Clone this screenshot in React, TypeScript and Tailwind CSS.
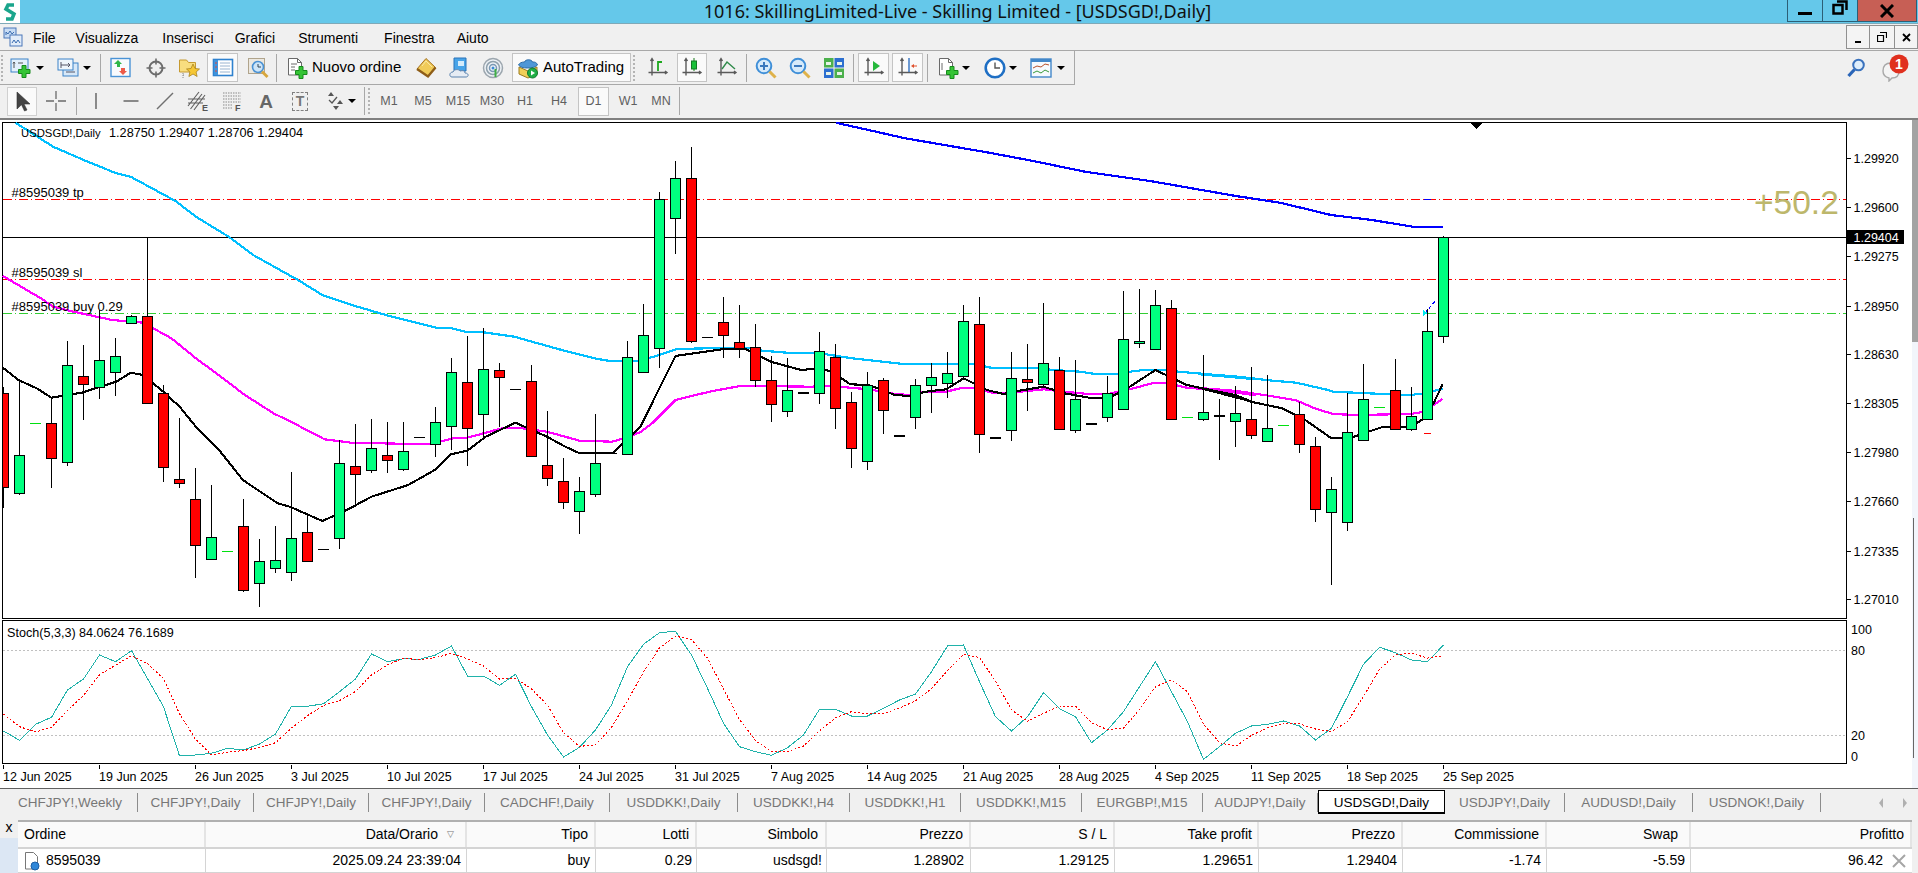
import React from "react";

type P = [number, number];
const A = (p: P[]): P[] => p.map(([x, y]) => [x / 2.45, 120 + y / 3]);
const B = (p: P[]): P[] => p.map(([x, y]) => [640 + x / 2.45, 120 + y / 3]);
const C = (p: P[]): P[] => p.map(([x, y]) => [1200 + x / 2.184, 230 + y / 3]);
const pts = (p: P[]) => p.map(([x, y]) => `${x.toFixed(1)},${y.toFixed(1)}`).join(" ");

const blueMa: P[] = [
  ...B([[480, 8], [650, 55], [850, 97], [960, 122], [1090, 155], [1250, 183], [1460, 228], [1568, 248]]),
  ...([[130, 645], [230, 660], [330, 680], [405, 680]] as P[]).map(([x, y]) => [1278 + x / 2.45, y / 3] as P),
];
const skyMa: P[] = [
  ...A([[38, 8], [130, 80], [205, 120], [285, 160], [320, 170], [430, 243], [480, 290], [560, 350], [620, 405], [730, 480], [790, 525], [870, 558], [960, 590], [1070, 623], [1100, 623], [1145, 637], [1185, 637], [1260, 650], [1370, 688], [1460, 716], [1490, 722]]),
  ...B([[0, 722], [20, 715], [60, 700], [90, 687], [165, 685], [280, 685], [300, 692], [360, 698], [430, 698], [520, 715], [640, 731], [810, 731], [860, 743], [980, 743], [1010, 750], [1080, 755], [1110, 761], [1170, 761], [1200, 755], [1240, 749], [1280, 749], [1320, 755], [1460, 770], [1510, 778]]),
  ...C([[0, 433], [40, 435], [90, 441], [150, 451], [210, 458], [280, 480], [290, 485], [400, 492], [460, 495], [490, 490], [530, 476]]),
];
const magMa: P[] = [
  ...A([[6, 467], [100, 535], [130, 560], [180, 575], [275, 600], [350, 608], [420, 655], [480, 715], [530, 760], [600, 825], [670, 880], [720, 910], [795, 958], [860, 968], [1050, 973], [1110, 955], [1145, 953], [1230, 925], [1280, 925], [1340, 935], [1420, 962], [1500, 965], [1540, 950]]),
  ...B([[0, 937], [30, 910], [87, 840], [170, 815], [245, 798], [285, 798], [420, 800], [460, 797], [560, 808], [625, 822], [660, 825], [700, 815], [750, 815], [790, 803], [820, 805], [870, 820], [890, 820], [930, 815], [990, 808], [1040, 815], [1090, 821], [1150, 821], [1200, 808], [1260, 788], [1285, 788], [1340, 803], [1460, 815], [1510, 826]]),
  ...C([[0, 474], [80, 483], [150, 497], [210, 511], [250, 535], [290, 552], [340, 555], [460, 552], [490, 545], [510, 525], [530, 507]]),
];
const blackMa: P[] = [
  ...A([[6, 742], [45, 780], [90, 805], [126, 833], [200, 818], [285, 785], [320, 758], [350, 765], [400, 815], [440, 860], [480, 920], [540, 995], [595, 1080], [680, 1150], [710, 1160], [790, 1203], [850, 1170], [910, 1130], [1000, 1095], [1065, 1050], [1105, 1003], [1145, 992], [1190, 950], [1263, 908], [1340, 950], [1385, 980], [1420, 1000], [1500, 1000]]),
  ...B([[0, 922], [87, 708], [200, 688], [260, 688], [320, 725], [395, 750], [440, 745], [470, 755], [515, 793], [560, 795], [625, 825], [660, 828], [700, 815], [750, 808], [793, 775], [850, 810], [890, 822], [930, 812], [988, 800], [1040, 820], [1100, 833], [1150, 833], [1200, 800], [1263, 750], [1340, 795], [1460, 826], [1500, 845]]),
  ...C([[0, 474], [70, 493], [110, 515], [180, 535], [230, 570], [285, 623], [330, 623], [400, 590], [460, 590], [490, 565], [510, 520], [530, 463]]),
];

type K = [string, number, number, number, number];
const candles: K[] = [
  ["r", 820, 1100, 800, 1165], ["g", 1006, 1120, 783, 1125], ["d", 910, 910, 0, 0], ["r", 910, 1015, 833, 1103],
  ["g", 736, 1025, 663, 1037], ["r", 769, 793, 675, 899], ["g", 721, 802, 570, 838], ["g", 709, 757, 655, 827],
  ["g", 589, 610, 585, 612], ["r", 589, 848, 353, 850], ["r", 820, 1042, 796, 1085], ["r", 1078, 1090, 895, 1105],
  ["r", 1138, 1276, 1045, 1373], ["g", 1252, 1318, 1095, 1320], ["d", 1294, 1294, 0, 0], ["r", 1219, 1411, 1137, 1415],
  ["g", 1324, 1390, 1258, 1460], ["g", 1321, 1345, 1218, 1358], ["g", 1255, 1357, 1057, 1382], ["r", 1237, 1324, 1178, 1325],
  ["k", 1288, 1288, 0, 0], ["g", 1030, 1255, 960, 1286], ["r", 1039, 1063, 912, 1160], ["g", 985, 1051, 897, 1060],
  ["r", 1006, 1021, 906, 1060], ["g", 994, 1048, 906, 1052], ["k", 952, 952, 0, 0], ["g", 907, 973, 861, 1010],
  ["g", 757, 919, 714, 990], ["r", 787, 925, 648, 1037], ["g", 748, 883, 625, 960], ["r", 751, 772, 729, 920],
  ["k", 808, 808, 0, 0], ["r", 784, 1009, 735, 1012], ["r", 1036, 1075, 873, 1097], ["r", 1084, 1147, 1015, 1167],
  ["g", 1114, 1174, 1072, 1242], ["g", 1030, 1123, 882, 1130], ["k", 1000, 1000, 0, 0], ["g", 712, 1003, 663, 1005],
  ["g", 646, 757, 552, 743], ["g", 238, 685, 216, 743], ["g", 175, 295, 123, 402], ["r", 175, 662, 82, 668],
  ["k", 652, 652, 0, 0], ["r", 607, 646, 531, 713], ["r", 667, 683, 555, 713], ["r", 682, 781, 612, 800],
  ["r", 781, 853, 708, 905], ["g", 811, 874, 714, 890], ["K", 815, 815, 0, 0], ["g", 694, 820, 636, 851],
  ["r", 712, 865, 672, 928], ["r", 847, 985, 817, 1043], ["g", 796, 1024, 756, 1049], ["r", 781, 871, 773, 941],
  ["K", 944, 944, 0, 0], ["g", 796, 892, 777, 928], ["g", 772, 796, 730, 878], ["g", 760, 790, 696, 833],
  ["g", 604, 769, 556, 772], ["r", 613, 943, 531, 998], ["K", 950, 950, 0, 0], ["g", 775, 931, 696, 962],
  ["r", 778, 785, 672, 872], ["g", 730, 793, 549, 800], ["r", 751, 928, 711, 930], ["g", 838, 931, 720, 938],
  ["K", 908, 908, 0, 0], ["g", 820, 892, 768, 905], ["g", 658, 868, 513, 870], ["g", 664, 670, 507, 684],
  ["g", 556, 688, 510, 690], ["r", 565, 898, 540, 900], ["d", 892, 892, 0, 0], ["g", 877, 898, 705, 903],
  ["K", 884, 884, 838, 1019], ["g", 880, 904, 798, 980], ["r", 898, 946, 741, 956], ["g", 925, 964, 765, 966],
  ["d", 916, 916, 0, 0], ["r", 883, 973, 845, 998], ["r", 979, 1168, 952, 1205], ["g", 1108, 1177, 1071, 1395],
  ["g", 937, 1207, 818, 1232], ["g", 838, 961, 732, 962], ["d", 862, 862, 0, 0], ["r", 811, 928, 717, 930],
  ["g", 889, 928, 801, 932], ["g", 634, 898, 567, 900], ["g", 350, 649, 348, 668],
];
const cy = (z: number) => Math.round(120 + z / 3);

const stochMain = [363, 391, 343, 322, 240, 207, 135, 155, 122, 206, 290, 438, 435, 430, 415, 420, 402, 372, 289, 289, 281, 245, 207, 132, 155, 146, 148, 135, 108, 198, 198, 226, 193, 290, 375, 441, 412, 360, 285, 170, 103, 68, 64, 135, 235, 340, 410, 425, 436, 413, 375, 298, 298, 318, 318, 295, 270, 252, 185, 108, 105, 215, 320, 363, 320, 248, 296, 320, 398, 360, 305, 230, 155, 245, 335, 448, 410, 370, 348, 343, 333, 348, 390, 355, 260, 163, 112, 128, 150, 155, 105];
const stochSig = stochMain.map((v, i) => (i === 0 ? 312 : i === 1 ? 350 : (stochMain[i - 2] + stochMain[i - 1] + v) / 3));
const toStoch = (a: number[]) => a.map((z, i) => [3.5 + 16 * i, 610 + z / 3] as P);

const priceLabels: [string, number][] = [["1.29920", 158], ["1.29600", 207], ["1.29275", 256], ["1.28950", 306], ["1.28630", 354], ["1.28305", 403], ["1.27980", 452], ["1.27660", 501], ["1.27335", 551], ["1.27010", 599]];
const dates = ["12 Jun 2025", "19 Jun 2025", "26 Jun 2025", "3 Jul 2025", "10 Jul 2025", "17 Jul 2025", "24 Jul 2025", "31 Jul 2025", "7 Aug 2025", "14 Aug 2025", "21 Aug 2025", "28 Aug 2025", "4 Sep 2025", "11 Sep 2025", "18 Sep 2025", "25 Sep 2025"];

function MainPane() {
  return (
    <svg width="1912" height="497" viewBox="0 122 1912 497" className="block shrink-0 text-[12.5px]">
      <g shapeRendering="crispEdges">
        <rect x="2.5" y="122.5" width="1844" height="496" fill="#fff" stroke="#000" />
        <line x1="3" x2="1846" y1="199.5" y2="199.5" stroke="#ff0000" strokeDasharray="9 3 1 3" />
        <line x1="3" x2="1846" y1="279.5" y2="279.5" stroke="#ff0000" strokeDasharray="9 3 1 3" />
        <line x1="3" x2="1846" y1="313.5" y2="313.5" stroke="#32cd32" strokeDasharray="9 3 1 3" />
        <line x1="3" x2="1846" y1="237.5" y2="237.5" stroke="#000" />
        <line x1="1424" x2="1431" y1="199.5" y2="199.5" stroke="#0000ff" />
        <polyline points={pts(blueMa)} fill="none" stroke="#0000ff" strokeWidth="2.2" />
        <polyline points={pts(skyMa)} fill="none" stroke="#00bfff" strokeWidth="2.2" />
        <polyline points={pts(magMa)} fill="none" stroke="#ff00ff" strokeWidth="2.2" />
        <polyline points={pts(blackMa)} fill="none" stroke="#000" strokeWidth="2.1" />
        {candles.map(([c, t, b, wt, wb], i) => {
          const x = 3 + 16 * i;
          if (c === "d" || c === "k" || c === "K") {
            const col = c === "d" ? "#00e010" : "#000";
            return (
              <g key={i}>
                {wb > 0 && <rect x={x} y={cy(wt)} width="1" height={cy(wb) - cy(wt)} fill="#000" />}
                <rect x={x - 5} y={cy(t)} width="11" height={c === "K" ? 2 : 1} fill={col} />
              </g>
            );
          }
          const left = Math.max(x - 5, 3);
          const right = x + 6;
          return (
            <g key={i}>
              <rect x={x} y={cy(wt)} width="1" height={cy(wb) - cy(wt)} fill="#000" />
              <rect x={left} y={cy(t)} width={right - left} height={cy(b) - cy(t) + 1} fill="#000" />
              <rect x={left === x - 5 ? left + 1 : left} y={cy(t) + 1} width={left === x - 5 ? 9 : right - left - 1} height={Math.max(cy(b) - cy(t) - 1, 1)} fill={c === "g" ? "#00ff7f" : "#ff0000"} />
            </g>
          );
        })}
        <rect x="1424" y="433" width="7" height="1" fill="#ff0000" />
        <line x1="1425" y1="313" x2="1437" y2="299" stroke="#0000ff" strokeDasharray="3 3" />
        <path d="M1423 310l5 3-5 3z" fill="#00e5ee" />
        <path d="M1470 123h12l-6 6z" fill="#000" />
        {priceLabels.map(([, y]) => (
          <line key={y} x1="1847" x2="1851" y1={y + 0.5} y2={y + 0.5} stroke="#000" />
        ))}
        <rect x="1847" y="230" width="57" height="14" fill="#000" />
      </g>
      <text x="21" y="137" fontSize="11.3">USDSGD!,Daily</text>
      <text x="109" y="137" fontSize="12.7">1.28750 1.29407 1.28706 1.29404</text>
      <text x="11.5" y="197" fontSize="13">#8595039 tp</text>
      <text x="11.5" y="277" fontSize="13">#8595039 sl</text>
      <text x="11.5" y="311" fontSize="13">#8595039 buy 0.29</text>
      <text x="1754" y="214" fontSize="33.5" fill="#bdb76b">+50.2</text>
      {priceLabels.map(([s, y]) => (
        <text key={s} x="1853.5" y={y + 4.5}>{s}</text>
      ))}
      <text x="1853.5" y="241.5" fill="#fff">1.29404</text>
    </svg>
  );
}

function StochPane() {
  return (
    <svg width="1912" height="145" viewBox="0 620 1912 145" className="block shrink-0 text-[12.5px]">
      <g shapeRendering="crispEdges">
        <rect x="2.5" y="620.5" width="1844" height="143" fill="#fff" stroke="#000" />
        <line x1="3" x2="1846" y1="650.5" y2="650.5" stroke="#c0c0c0" strokeDasharray="2 2" />
        <line x1="3" x2="1846" y1="735.5" y2="735.5" stroke="#c0c0c0" strokeDasharray="2 2" />
        <polyline points={pts(toStoch(stochMain))} fill="none" stroke="#20b2aa" strokeWidth="1" />
        <polyline points={pts(toStoch(stochSig))} fill="none" stroke="#ff0000" strokeWidth="1" strokeDasharray="2 2" />
      </g>
      <text x="7" y="636.5" fontSize="12.6">Stoch(5,3,3) 84.0624 76.1689</text>
      <text x="1851" y="633.5">100</text>
      <text x="1851" y="655">80</text>
      <text x="1851" y="740">20</text>
      <text x="1851" y="761">0</text>
    </svg>
  );
}

function DateAxis() {
  return (
    <svg width="1912" height="25" viewBox="0 764 1912 25" className="block shrink-0 text-[12.5px]">
      <g shapeRendering="crispEdges">
        {dates.map((_, i) => (
          <line key={i} x1={3.5 + 96 * i} x2={3.5 + 96 * i} y1="764" y2="768" stroke="#000" />
        ))}
      </g>
      {dates.map((d, i) => (
        <text key={d} x={3 + 96 * i} y="780">{d}</text>
      ))}
    </svg>
  );
}

const Plus = ({ x, y }: { x: number; y: number }) => (
  <path transform={`translate(${x} ${y})`} d="M4 .5h4v4h4v4H8v4H4v-4H.5v-4H4z" fill="#35c435" stroke="#178a1c" />
);
const I = ({ children, className }: { children: React.ReactNode; className?: string }) => (
  <svg width="22" height="22" viewBox="0 0 22 22" className={`block shrink-0 ${className ?? ""}`}>{children}</svg>
);
const Axes = () => (
  <path d="M5 1.5v17M1.5 15.5H20M3.5 4L5 1.5 6.5 4M18 14l2 1.5-2 1.5" fill="none" stroke="#5a5a5a" strokeWidth="1.4" />
);
const Caret = () => (
  <div className="w-[12px] shrink-0 flex items-center justify-center">
    <div className="w-0 h-0 border-x-[4px] border-x-transparent border-t-[4px] border-t-black" />
  </div>
);
const Sep = ({ className }: { className: string }) => <div className={`w-px h-[28px] bg-[#a8a8a8] shrink-0 ${className}`} />;

function Toolbar1() {
  return (
    <div className="flex items-center h-[34px] w-[1075px] border-r border-b border-[#a8a8a8] shrink-0">
      <div className="w-[3px] h-[26px] ml-[1px] mr-[4px] border-l-2 border-dotted border-[#b4b4b4]" />
      <I className="mx-[2px]">
        <rect x="1" y="2" width="17" height="13" fill="#e4f0fb" stroke="#3b82c8" />
        <path d="M4 5v6M8 6h5M4 5l-1 1.5M4 5l1 1.5" stroke="#555" fill="none" />
        <Plus x={8} y={8} />
      </I>
      <Caret />
      <I className="ml-[11px] mr-[2px]">
        <rect x="6" y="6" width="15" height="13" fill="#d7e8f8" stroke="#3b82c8" />
        <rect x="1" y="2" width="15" height="11" fill="#eef5fc" stroke="#3b82c8" />
        <path d="M4 5v6M4 8h9M11 6l2 2-2 2M9 15h9" stroke="#556" fill="none" />
      </I>
      <Caret />
      <Sep className="ml-[7px]" />
      <I className="ml-[9px]">
        <rect x="1" y="1.5" width="19" height="18" fill="#f8fafd" stroke="#4a93d6" strokeWidth="1.4" />
        <path d="M7 3l4 4H9v3H6V7H3z" transform="translate(1 0)" fill="#2fb64a" />
        <path d="M13 18l-4-4h2v-3h4v3h2z" fill="#ee5a48" />
      </I>
      <I className="ml-[13px]">
        <circle cx="11" cy="11" r="6.5" fill="none" stroke="#6c6c6c" strokeWidth="2" />
        <path d="M11 1.5v6M11 14.5v6M1.5 11h6M14.5 11h6" stroke="#6c6c6c" strokeWidth="1.6" />
      </I>
      <I className="ml-[11px]">
        <path d="M1.5 3h7l2 2.5h7V15h-16z" fill="#f8dd7f" stroke="#c69a30" />
        <path d="M15 7l2 4.5 4.500.5-3.400 3 1 4.500-4.100-2.500-4.100 2.500 1-4.500-3.400-3 4.500-.5z" fill="#f6c734" stroke="#a98320" strokeWidth=".8" />
        <path d="M5 16v5M5 18h2" stroke="#888" strokeDasharray="1 1" />
      </I>
      <div className="ml-[7px] w-[31px] h-[29px] shrink-0 flex items-center justify-center bg-[#fafafa] border border-[#c4c4c4]">
        <I>
          <rect x="1.5" y="2.5" width="19" height="16" fill="#fff" stroke="#2f82cf" strokeWidth="1.6" />
          <rect x="2" y="3" width="4" height="15" fill="#3f93dc" />
          <path d="M8 6h10M8 9h10M8 12h10M8 15h10" stroke="#99b4d0" />
          <path d="M3 6h2M3 10h2M3 14h2" stroke="#e4483c" />
        </I>
      </div>
      <I className="ml-[9px]">
        <rect x="1.5" y="1.5" width="16" height="15" fill="#ece8e0" stroke="#b0a48c" />
        <circle cx="11" cy="10" r="5.5" fill="#cde5f8" stroke="#4b92d4" strokeWidth="1.6" />
        <path d="M11 7v3h3" stroke="#345" fill="none" />
        <path d="M15 14.5l5.500 5.500" stroke="#d7a63c" strokeWidth="2.8" />
      </I>
      <Sep className="ml-[7px]" />
      <I className="ml-[9px]">
        <path d="M2.5 1.5h9l4 4V18h-13z" fill="#fff" stroke="#6a6a6a" />
        <path d="M11.5 1.5v4h4M5 7h6M5 10h4M5 13h4" stroke="#6a6a6a" fill="none" />
        <Plus x={9} y={9} />
      </I>
      <div className="ml-[4px] w-[90px] text-[15px] whitespace-nowrap text-black">Nuovo ordine</div>
      <I className="ml-[13px]">
        <path d="M11 1.5l9.500 9-7.500 9-11-7.500z" fill="#f0cb58" stroke="#a4711f" />
        <path d="M2 12l11 7.500 7.500-9" fill="none" stroke="#8e5d18" strokeWidth="2.4" />
        <path d="M7 9l4-5 6 6" fill="none" stroke="#f9e7a4" />
      </I>
      <I className="ml-[12px]">
        <path d="M5 1h12v13H5z" fill="#48a4e8" stroke="#2b73b8" />
        <path d="M9 4h6v5H9z" fill="#d5ecfb" />
        <path d="M3 20c-3 0-3-5 1-5 1-3 6-3 7-1 3-1 5 0 5 2 4 0 4 4 1 4z" fill="#e6ecf4" stroke="#5b82ae" />
      </I>
      <I className="ml-[11px]">
        <circle cx="11" cy="11" r="9.5" fill="#eef2f6" stroke="#9ca6ae" strokeWidth="1.5" />
        <circle cx="11" cy="11" r="6.5" fill="none" stroke="#8fa0ac" strokeWidth="1.5" />
        <circle cx="11" cy="11" r="3.5" fill="none" stroke="#7b98b4" strokeWidth="1.5" />
        <circle cx="11" cy="11" r="1.5" fill="#3a8bd4" />
        <path d="M13.5 12v8" stroke="#3fae45" strokeWidth="2" />
      </I>
      <div className="ml-[8px] w-[119px] h-[29px] shrink-0 flex items-center bg-[#fafafa] border border-[#c4c4c4]">
        <I className="ml-[4px]">
          <path d="M2 10l9 4 9-4v7l-9 4-9-4z" fill="#f1cf58" stroke="#9d7c1f" />
          <path d="M1.5 8c2 2 4 3 9 3s8-1 10-3c-1-3-3-3-5-3-1-3-7-3-8 0-3 0-5 1-6 3z" fill="#4f97d6" stroke="#2c6ba6" />
          <circle cx="15.5" cy="16" r="5" fill="#1fae45" stroke="#127a2e" />
          <path d="M14 13.5l4 2.500-4 2.500z" fill="#fff" />
        </I>
        <span className="ml-[4px] text-[15px] whitespace-nowrap text-black">AutoTrading</span>
      </div>
      <div className="ml-[2px] w-[3px] h-[26px] border-l-2 border-dotted border-[#b4b4b4]" />
      <I className="ml-[11px]">
        <Axes />
        <path d="M11 14V5h4" fill="none" stroke="#1ea81e" strokeWidth="1.8" />
      </I>
      <div className="ml-[8px] w-[30px] h-[29px] shrink-0 flex items-center justify-center bg-[#fafafa] border border-[#c4c4c4]">
        <I>
          <Axes />
          <path d="M13 1v13" stroke="#1a7a1a" />
          <rect x="10.5" y="4" width="5" height="8" fill="#19c039" stroke="#137a25" />
        </I>
      </div>
      <I className="ml-[9px]">
        <Axes />
        <path d="M6 12l5-7 8 7" fill="none" stroke="#2f8a4a" strokeWidth="1.4" />
      </I>
      <Sep className="ml-[8px]" />
      <I className="ml-[8px]">
        <circle cx="9" cy="9" r="7.3" fill="#d6eafa" stroke="#3f8fd8" strokeWidth="2" />
        <path d="M5 9h8M9 5v8" stroke="#3a78bd" strokeWidth="2" />
        <path d="M14.5 14.5l6 6" stroke="#dfb24a" strokeWidth="3" />
      </I>
      <I className="ml-[12px]">
        <circle cx="9" cy="9" r="7.3" fill="#d6eafa" stroke="#3f8fd8" strokeWidth="2" />
        <path d="M5 9h8" stroke="#3a78bd" strokeWidth="2" />
        <path d="M14.5 14.5l6 6" stroke="#dfb24a" strokeWidth="3" />
      </I>
      <I className="ml-[12px]">
        <rect x="1" y="1" width="9.5" height="9.5" fill="#4cb04c" />
        <rect x="11.5" y="1" width="9.5" height="9.5" fill="#2c6fd0" />
        <rect x="1" y="11.5" width="9.5" height="9.5" fill="#2c6fd0" />
        <rect x="11.5" y="11.5" width="9.5" height="9.5" fill="#4cb04c" />
        <path d="M3 5h5v3H3zM14 5h5v3h-5zM3 15h5v3H3zM14 15h5v3h-5z" fill="#e8f2e8" />
      </I>
      <Sep className="ml-[8px]" />
      <div className="ml-[4px] w-[31px] h-[29px] shrink-0 flex items-center justify-center bg-[#fafafa] border border-[#c4c4c4]">
        <I>
          <Axes />
          <path d="M10 4l7 5-7 5z" fill="#26b83c" />
        </I>
      </div>
      <div className="ml-[3px] w-[31px] h-[29px] shrink-0 flex items-center justify-center bg-[#fafafa] border border-[#c4c4c4]">
        <I>
          <Axes />
          <path d="M12 1v14" stroke="#2f6fc0" strokeWidth="1.4" />
          <path d="M14 9l3-2v1.5h3v1h-3V11z" fill="#e0502c" />
        </I>
      </div>
      <Sep className="ml-[4px]" />
      <I className="ml-[9px]">
        <path d="M2.5 1.5h9l4 4V18h-13z" fill="#fff" stroke="#6a6a6a" />
        <path d="M11.5 1.5v4h4M5 6v7" stroke="#6a6a6a" fill="none" />
        <Plus x={9} y={9} />
      </I>
      <div className="ml-[1px]"><Caret /></div>
      <I className="ml-[12px]">
        <circle cx="11" cy="11" r="9.3" fill="#fff" stroke="#1f6fc4" strokeWidth="2.6" />
        <path d="M11 5.5V11h5" fill="none" stroke="#555" strokeWidth="1.4" />
      </I>
      <div className="ml-[1px]"><Caret /></div>
      <I className="ml-[11px]">
        <rect x="1" y="2" width="20" height="18" fill="#f7fafe" stroke="#4287c9" strokeWidth="1.4" />
        <rect x="1" y="2" width="20" height="3" fill="#4287c9" />
        <path d="M3 11l4-2 4 1 4-3 4 1" fill="none" stroke="#b8502a" />
        <path d="M3 16l4-2 4 2 4-3 4 2" fill="none" stroke="#3a9a3a" />
      </I>
      <div className="ml-[3px]"><Caret /></div>
    </div>
  );
}

const tfs = [
  ["M1", "w-[34px] ml-[1px]"], ["M5", "w-[34px]"], ["M15", "w-[34px] ml-[1px]"], ["M30", "w-[34px]"], ["H1", "w-[32px]"], ["H4", "w-[32px] ml-[2px]"],
];

function Toolbar2() {
  return (
    <div className="flex items-center h-[35px] border-b-2 border-[#808080] pb-[1px] shrink-0">
      <div className="ml-[7px] w-[30px] h-[29px] shrink-0 flex items-center justify-center bg-[#fafafa] border border-[#d0d0d0]">
        <I><path d="M6 2v17l4.500-4.300 3 6.300 2.500-1-3-6h6z" fill="#444" stroke="#333" strokeWidth=".6" /></I>
      </div>
      <I className="ml-[8px]"><path d="M11 1v8M11 13v8M1 11h8M13 11h8" stroke="#6a6a6a" strokeWidth="1.3" /></I>
      <Sep className="ml-[9px]" />
      <I className="ml-[8px]"><path d="M11 3v16" stroke="#707070" strokeWidth="1.6" /></I>
      <I className="ml-[13px]"><path d="M3.5 11h15" stroke="#707070" strokeWidth="1.6" /></I>
      <I className="ml-[12px]"><path d="M3 19L19 3" stroke="#707070" strokeWidth="1.5" /></I>
      <I className="ml-[11px]">
        <path d="M1 16L12 2M3.5 19L15 4M7 20L18 5M1 9h17M1 13h15" stroke="#5f5f5f" strokeWidth="1.1" />
        <text x="15" y="21" fontSize="9" fontWeight="700" fill="#555">E</text>
      </I>
      <I className="ml-[12px]">
        <path d="M2 3h18M2 6h18M2 9h18M2 12h18M2 15h10M2 18h10" stroke="#8a8a8a" strokeDasharray="1.5 1" />
        <text x="14" y="21" fontSize="9" fontWeight="700" fill="#555">F</text>
      </I>
      <div className="ml-[12px] w-[22px] text-center text-[19px] font-bold text-[#666] leading-none shrink-0">A</div>
      <div className="ml-[15px] w-[16px] h-[19px] shrink-0 border border-dashed border-[#808080] flex items-center justify-center text-[14px] font-bold text-[#777] leading-none">T</div>
      <I className="ml-[16px]">
        <path d="M7 2l3 4H4zM16 10l3 4h-6zM12 20l-3-4h6z" fill="#555" />
        <path d="M5 10l3 3 5-6" fill="none" stroke="#555" strokeWidth="1.3" />
      </I>
      <Caret />
      <Sep className="ml-[6px]" />
      <div className="ml-[3px] w-[3px] h-[26px] border-l-2 border-dotted border-[#b4b4b4]" />
      {tfs.map(([t, c]) => (
        <div key={t} className={`${c} text-center text-[12.5px] text-[#5f5f5f] shrink-0`}>{t}</div>
      ))}
      <div className="ml-[3px] w-[31px] h-[29px] shrink-0 flex items-center justify-center bg-[#fafafa] border border-[#c4c4c4] text-[12.5px] text-[#5f5f5f]">D1</div>
      <div className="ml-[3px] w-[32px] text-center text-[12.5px] text-[#5f5f5f] shrink-0">W1</div>
      <div className="w-[34px] text-center text-[12.5px] text-[#5f5f5f] shrink-0">MN</div>
      <Sep className="ml-[1px]" />
    </div>
  );
}

const tabs: [string, string][] = [
  ["CHFJPY!,Weekly", "w-[138px] pl-[3px]"], ["CHFJPY!,Daily", "w-[116px]"], ["CHFJPY!,Daily", "w-[115px]"], ["CHFJPY!,Daily", "w-[116px]"],
  ["CADCHF!,Daily", "w-[125px]"], ["USDDKK!,Daily", "w-[128px]"], ["USDDKK!,H4", "w-[112px]"], ["USDDKK!,H1", "w-[111px]"],
  ["USDDKK!,M15", "w-[121px]"], ["EURGBP!,M15", "w-[121px]"], ["AUDJPY!,Daily", "w-[115px]"],
];
const tabsAfter: [string, string][] = [
  ["USDJPY!,Daily", "w-[120px]"], ["AUDUSD!,Daily", "w-[128px]"], ["USDNOK!,Daily", "w-[128px]"],
];

const cols = [
  ["Ordine", "w-[188px] text-left pl-[6px]"], ["Data/Orario", "w-[261px] pr-[27px]"], ["Tipo", "w-[129px] pr-[6px]"], ["Lotti", "w-[101px] pr-[6px]"],
  ["Simbolo", "w-[130px] pr-[7px]"], ["Prezzo", "w-[144px] pr-[6px]"], ["S / L", "w-[144px] pr-[6px]"], ["Take profit", "w-[144px] pr-[5px]"],
  ["Prezzo", "w-[144px] pr-[6px]"], ["Commissione", "w-[144px] pr-[6px]"], ["Swap", "w-[144px] pr-[11px]"], ["Profitto", "w-[221px] pr-[6px]"],
];
const row = [
  ["2025.09.24 23:39:04", "w-[261px] pr-[5px]"], ["buy", "w-[129px] pr-[5px]"], ["0.29", "w-[101px] pr-[4px]"], ["usdsgd!", "w-[130px] pr-[4px]"],
  ["1.28902", "w-[144px] pr-[6px]"], ["1.29125", "w-[144px] pr-[5px]"], ["1.29651", "w-[144px] pr-[5px]"], ["1.29404", "w-[144px] pr-[5px]"],
  ["-1.74", "w-[144px] pr-[5px]"], ["-5.59", "w-[144px] pr-[5px]"],
];

export default function App() {
  return (
    <div className="w-[1918px] h-[873px] overflow-hidden flex flex-col bg-[#f0f0f0] font-['Liberation_Sans',Arial,sans-serif] text-black">
      <div className="h-[24px] shrink-0 grid grid-cols-[1fr_auto_1fr] items-start bg-[#65c8ea] border-b border-[#7fa9b8]">
        <div className="h-[23px] w-[20px] bg-white flex items-center justify-center">
          <svg width="14" height="20" viewBox="0 0 14 20">
            <path d="M11 3L5 3 3 7 11 12 9 17 3 17" fill="none" stroke="#1aa58c" strokeWidth="3.6" />
          </svg>
        </div>
        <div className="h-[23px] leading-[23px] pr-[3px] text-[18px] font-['Noto_Sans',sans-serif] text-[#111] whitespace-nowrap">1016: SkillingLimited-Live - Skilling Limited - [USDSGD!,Daily]</div>
        <div className="justify-self-end flex h-[22px] pr-[1px]">
          <div className="w-[36px] h-[22px] border border-t-0 border-[#2c5f76] flex items-end justify-center pb-[6px]"><div className="w-[14px] h-[3px] bg-black" /></div>
          <div className="w-[34px] h-[22px] border-b border-[#2c5f76] flex items-start justify-center">
            <svg width="16" height="15" viewBox="0 0 16 15"><path d="M5 1.5h9.500V10M1.500 5h9v8.500h-9z" fill="none" stroke="#000" strokeWidth="2.5" /></svg>
          </div>
          <div className="w-[60px] h-[22px] bg-[#c75f55] border border-t-0 border-[#2c5f76] flex items-center justify-center">
            <svg width="14" height="14" viewBox="0 0 14 14"><path d="M1 1l12 12M13 1L1 13" stroke="#000" strokeWidth="3" /></svg>
          </div>
        </div>
      </div>

      <div className="h-[27px] shrink-0 flex items-center border-b border-[#a8a8a8] text-[14px]">
        <svg width="20" height="20" viewBox="0 0 20 20" className="ml-[3px] shrink-0">
          <rect x="1" y="1" width="12" height="10" fill="#c8dcf4" stroke="#4a77b8" />
          <rect x="7" y="8" width="12" height="11" fill="#e2ecf9" stroke="#4a77b8" />
          <path d="M3 8V5l2 2 2-3 2 3 2-2M9 16l2-3 2 3 2-3 2 3" fill="none" stroke="#3b6db0" />
        </svg>
        <div className="flex pt-[2px]">
          <span className="ml-[10px]">File</span>
          <span className="ml-[20px]">Visualizza</span>
          <span className="ml-[24px]">Inserisci</span>
          <span className="ml-[21px]">Grafici</span>
          <span className="ml-[23px]">Strumenti</span>
          <span className="ml-[26px]">Finestra</span>
          <span className="ml-[22px]">Aiuto</span>
        </div>
        <div className="ml-auto flex h-[24px] self-start mt-[1px]">
          <div className="w-[24px] border border-[#909090] bg-[#f4f4f4] flex items-end justify-center pb-[5px]"><div className="w-[6px] h-[2px] bg-black" /></div>
          <div className="w-[24px] border-y border-[#909090] bg-[#f4f4f4] flex items-center justify-center">
            <svg width="10" height="10" viewBox="0 0 10 10"><path d="M3 .5h6.500V6M.5 3.500h6v6h-6z" fill="none" stroke="#000" strokeWidth="1.2" /></svg>
          </div>
          <div className="w-[24px] border border-[#909090] bg-[#f4f4f4] flex items-center justify-center">
            <svg width="9" height="9" viewBox="0 0 9 9"><path d="M1 1l7 7M8 1L1 8" stroke="#000" strokeWidth="1.8" /></svg>
          </div>
        </div>
      </div>

      <div className="h-[34px] shrink-0 flex items-start">
        <Toolbar1 />
        <div className="ml-auto flex items-center h-[34px] pr-[8px]">
          <svg width="20" height="20" viewBox="0 0 20 20">
            <circle cx="12.5" cy="7" r="5.3" fill="#dfeefb" stroke="#3a72bd" strokeWidth="2" />
            <path d="M8.5 11.5L2.5 18" stroke="#2a65b8" strokeWidth="3.2" />
          </svg>
          <svg width="30" height="28" viewBox="0 0 30 28" className="ml-[14px]">
            <path d="M3 17c0-5 3-8 8-8s8 3 8 8-3 7-7 7l-3 3v-3c-4-1-6-3-6-7z" fill="#f4f4f4" stroke="#a8a8a8" strokeWidth="1.4" />
            <circle cx="19" cy="10" r="9.5" fill="#e0301e" />
            <text x="19" y="15" textAnchor="middle" fontSize="14" fontWeight="700" fill="#fff">1</text>
          </svg>
        </div>
      </div>
      <Toolbar2 />

      <div className="h-[669px] shrink-0 flex border-b border-[#606060]">
        <div className="w-[1912px] bg-white flex flex-col pt-[2px] shrink-0">
          <MainPane />
          <div className="h-px shrink-0" />
          <StochPane />
          <DateAxis />
        </div>
        <div className="w-[6px] flex flex-col bg-[#f2f5fb]">
          <div className="h-[222px] bg-[#a3a3a3] shrink-0" />
          <div className="mt-[176px] ml-[1px] w-px h-[240px] bg-[#666]" />
        </div>
      </div>

      <div className="h-[31px] shrink-0 flex items-start text-[13.5px] text-[#777]">
        {tabs.map(([t, c], i) => (
          <div key={i} className={`${c} h-[19px] mt-[4px] leading-[19px] text-center border-r border-[#8c8c8c] shrink-0 whitespace-nowrap`}>{t}</div>
        ))}
        <div className="w-[127px] h-[24px] mt-[1px] leading-[23px] text-center bg-white text-black border-x border-b-2 border-t border-black shrink-0">USDSGD!,Daily</div>
        {tabsAfter.map(([t, c], i) => (
          <div key={i} className={`${c} h-[19px] mt-[4px] leading-[19px] text-center border-r border-[#8c8c8c] shrink-0 whitespace-nowrap`}>{t}</div>
        ))}
        <div className="ml-[58px] mt-[9px] w-0 h-0 border-y-[5px] border-y-transparent border-r-[4px] border-r-[#b0b0b0]" />
        <div className="ml-[20px] mt-[9px] w-0 h-0 border-y-[5px] border-y-transparent border-l-[4px] border-l-[#b0b0b0]" />
      </div>

      <div className="flex-1 flex text-[14px]">
        <div className="w-[18px] shrink-0 flex flex-col">
          <div className="h-[18px] text-center leading-[14px]">x</div>
          <div className="flex-1 bg-[#dce7f4]" />
        </div>
        <div className="w-[1894px] shrink-0 border-t-2 border-[#b0b0b0] bg-white flex flex-col">
          <div className="h-[27px] shrink-0 flex bg-[#fafafa] border-b-2 border-[#d4d4d4]">
            {cols.map(([t, c], i) => (
              <div key={i} className={`${c} shrink-0 border-r-2 border-[#e4e4e4] whitespace-nowrap flex items-center ${i === 0 ? "justify-start" : "justify-end"}`}>
                {t}
                {i === 1 && <span className="w-[24px] -mr-[24px] flex justify-center text-[9px] text-[#777]">▽</span>}
              </div>
            ))}
          </div>
          <div className="flex-1 flex border-b border-[#d4d4d4]">
            <div className="w-[188px] shrink-0 border-r border-[#d4d4d4] flex items-center pl-[5px]">
              <svg width="18" height="20" viewBox="0 0 18 20" className="shrink-0">
                <path d="M2.5 1.5h8l4 4V18h-12z" fill="#fff" stroke="#777" />
                <circle cx="12" cy="15" r="4" fill="#2e86d8" stroke="#1c5fa6" />
              </svg>
              <span className="ml-[5px]">8595039</span>
            </div>
            {row.map(([t, c]) => (
              <div key={t} className={`${c} shrink-0 border-r border-[#d4d4d4] flex items-center justify-end whitespace-nowrap`}>{t}</div>
            ))}
            <div className="w-[221px] shrink-0 flex items-center justify-end pr-[6px]">
              <span>96.42</span>
              <svg width="14" height="14" viewBox="0 0 14 14" className="ml-[9px]"><path d="M1 1l12 12M13 1L1 13" stroke="#a6a6a6" strokeWidth="2" /></svg>
            </div>
          </div>
        </div>
      </div>
    </div>
  );
}
